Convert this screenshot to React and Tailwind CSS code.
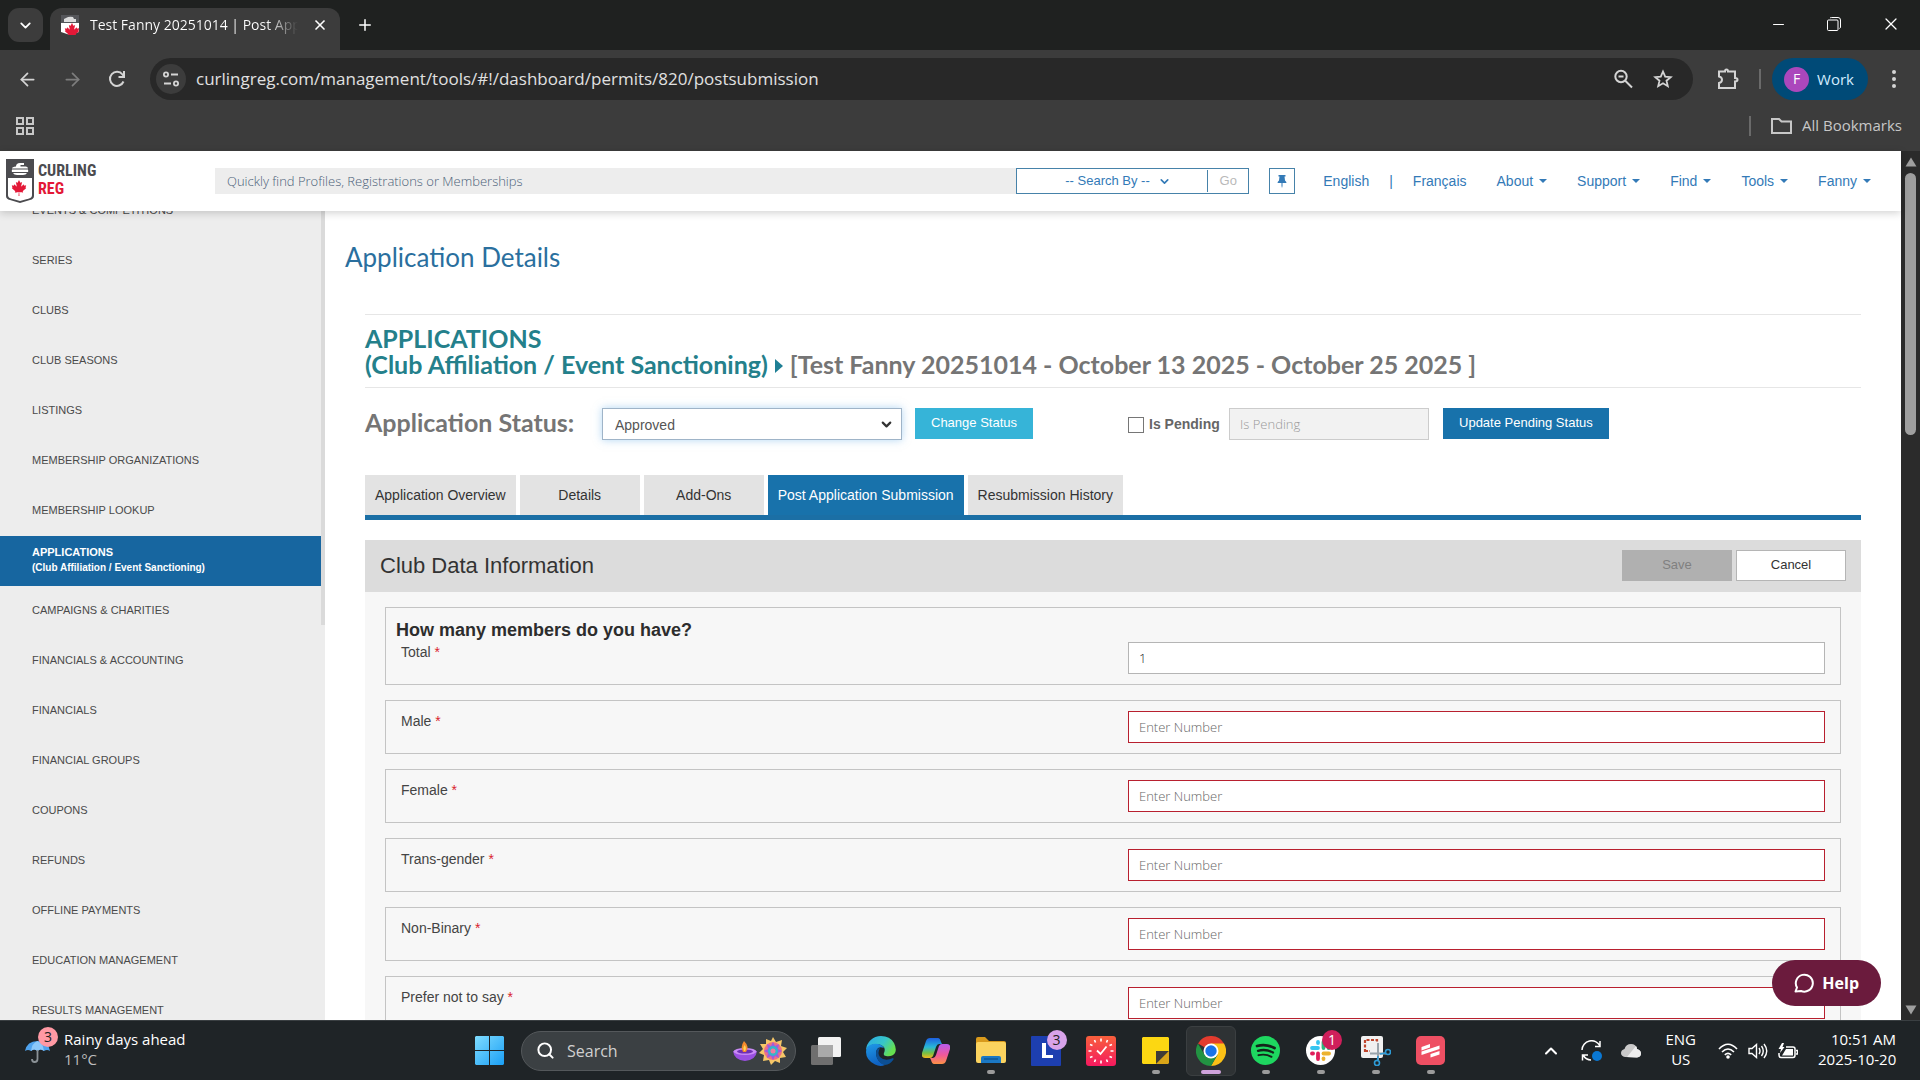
import { useState } from "react";
import {
    ArrowLeft,
    ArrowRight,
    ChevronDown,
    ChevronUp,
    Minus,
    Plus,
    Search,
    X,
} from "lucide-react";
import { FaCanadianMapleLeaf } from "react-icons/fa";

const menuItems = [
    "EVENTS & COMPETITIONS",
    "SERIES",
    "CLUBS",
    "CLUB SEASONS",
    "LISTINGS",
    "MEMBERSHIP ORGANIZATIONS",
    "MEMBERSHIP LOOKUP",
    "APPLICATIONS",
    "CAMPAIGNS & CHARITIES",
    "FINANCIALS & ACCOUNTING",
    "FINANCIALS",
    "FINANCIAL GROUPS",
    "COUPONS",
    "REFUNDS",
    "OFFLINE PAYMENTS",
    "EDUCATION MANAGEMENT",
    "RESULTS MANAGEMENT",
];

const tabs = [
    "Application Overview",
    "Details",
    "Add-Ons",
    "Post Application Submission",
    "Resubmission History",
];

const memberFields = [
    { id: "total", label: "Total", value: "1" },
    { id: "male", label: "Male", value: "" },
    { id: "female", label: "Female", value: "" },
    { id: "trans", label: "Trans-gender", value: "" },
    { id: "nonbinary", label: "Non-Binary", value: "" },
    { id: "notsay", label: "Prefer not to say", value: "" },
];

const LogoShield = ({ className }) => (
    <svg viewBox="0 0 28 44" className={className}>
        <path d="M0 0H28V37Q28 40 24 41L14 44L4 41Q0 40 0 37Z" fill="#4b4b4f" />
        <path d="M2 19H26V36Q26 38.500 23 39.500L14 42L5 39.500Q2 38.500 2 36Z" fill="#fff" />
        <path d="M10 7.500Q10 4 14 4H18V6H14.500V7.500H20Q22 8 22 9.500H6Q6 8 10 7.500Z" fill="#fff" />
        <path d="M6 10.500H22Q22.500 12 22 13H6Q5.500 12 6 10.500Z" fill="#fff" />
        <path d="M7 14H21Q20 16 17 16H11Q8 16 7 14Z" fill="#fff" />
        <FaCanadianMapleLeaf x="5" y="21" width="18" height="18" color="#e31837" />
    </svg>
);

/* Browser frame */

const BrowserTabs = () => (
    <div className="flex h-[50px] shrink-0 items-start bg-[#1f2120] pt-2 pl-2 text-white">
        <button aria-label="Search tabs" className="flex h-[34px] w-[35px] items-center justify-center rounded-[11px] bg-[#3c3c3c]">
            <ChevronDown size={17} strokeWidth={2.5} />
        </button>
        <div className="ml-[7px] flex h-[42px] w-[290px] items-center rounded-t-xl bg-[#3c3c3c] pb-2 pl-[11px]">
            <svg viewBox="0 0 18 20" className="h-5 w-[18px]">
                <path d="M0 0H18V17Q15 18 9 20Q3 18 0 17Z" fill="#fff" />
                <path d="M0 0H18V8H0Z" fill="#55565a" />
                <path d="M5 3Q8 1 12 2L13 4H15V7H3V4Z" fill="#ddd" />
                <FaCanadianMapleLeaf x="3" y="8" width="12" height="10" color="#e31837" />
            </svg>
            <span className="ml-[11px] w-[208px] overflow-hidden bg-gradient-to-r from-white from-85% to-transparent bg-clip-text text-sm whitespace-nowrap text-transparent">
                Test Fanny 20251014 | Post App
            </span>
            <button aria-label="Close tab" className="ml-[14px]">
                <X size={16} strokeWidth={2.5} />
            </button>
        </div>
        <button aria-label="New tab" className="mt-2 ml-4">
            <Plus size={18} strokeWidth={2} />
        </button>
        <div className="mt-[6px] mr-[19px] ml-auto flex items-center gap-10">
            <button aria-label="Minimize">
                <Minus size={17} strokeWidth={1.5} />
            </button>
            <button aria-label="Restore">
                <svg viewBox="0 0 14 14" className="h-[14px] w-[14px]" fill="none" stroke="currentColor">
                    <rect x="0.500" y="3" width="10.500" height="10.500" rx="1" />
                    <path d="M3 1Q3.500 0.500 4.500 0.500H11Q13.500 0.500 13.500 3V10Q13.500 11 12.500 11.500" />
                </svg>
            </button>
            <button aria-label="Close window">
                <X size={20} strokeWidth={1.5} />
            </button>
        </div>
    </div>
);

const BrowserToolbar = () => (
    <div className="flex h-[58px] shrink-0 items-center bg-[#3c3c3c] pr-5 pl-[17px] text-[#d4d4d4]">
        <button aria-label="Back">
            <ArrowLeft size={21} />
        </button>
        <button aria-label="Forward" className="ml-6 text-[#7d7d7d]">
            <ArrowRight size={21} />
        </button>
        <button aria-label="Reload" className="ml-6">
            <svg viewBox="0 0 20 20" className="h-5 w-5" fill="none" stroke="currentColor" strokeWidth="2">
                <path d="M16.500 12.500A7 7 0 1 1 15.500 5.500L17 7.500" />
                <path d="M17 2V8H11.500" />
            </svg>
        </button>
        <div className="ml-[23px] flex h-[42px] flex-1 items-center rounded-full bg-[#282828] pr-5 pl-[6px]">
            <button aria-label="Site settings" className="flex h-[30px] w-[30px] items-center justify-center rounded-full bg-[#3c3c3c]">
                <svg viewBox="0 0 16 16" className="h-4 w-4" fill="none" stroke="currentColor" strokeWidth="1.800">
                    <circle cx="3" cy="3.500" r="2.100" />
                    <path d="M8 3.500H15M1 12.500H8" />
                    <circle cx="13" cy="12.500" r="2.100" />
                </svg>
            </button>
            <input
                aria-label="Address"
                className="ml-[10px] min-w-0 flex-1 bg-transparent text-[17px] text-[#e0e0e0] outline-none"
                defaultValue="curlingreg.com/management/tools/#!/dashboard/permits/820/postsubmission"
            />
            <button aria-label="Zoom">
                <svg viewBox="0 0 20 20" className="h-5 w-5" fill="none" stroke="currentColor" strokeWidth="2">
                    <circle cx="8" cy="7.500" r="5.700" />
                    <path d="M12 11.500L19 18.500M5.500 7.500H10.500" />
                </svg>
            </button>
            <button aria-label="Bookmark" className="ml-5">
                <svg viewBox="0 0 20 20" className="h-5 w-5" fill="none" stroke="currentColor" strokeWidth="1.800">
                    <path d="M10 2.500L12.200 7.600L17.700 8.100L13.500 11.700L14.800 17.200L10 14.300L5.200 17.200L6.500 11.700L2.300 8.100L7.800 7.600Z" />
                </svg>
            </button>
        </div>
        <button aria-label="Extensions" className="ml-6">
            <svg viewBox="0 0 22 22" className="h-[22px] w-[22px]" fill="none" stroke="currentColor" strokeWidth="2">
                <path d="M2 3.500H8Q8 1.500 9.500 1.500Q11 1.500 11 3.500H18V10Q20.500 10 20.500 11.800Q20.500 13.500 18 13.500V20H2V15Q5 14.500 5 11.800Q5 9 2 8.500Z" />
            </svg>
        </button>
        <span className="ml-5 h-5 w-[2px] bg-[#6a6a6a]" />
        <button className="ml-[11px] flex h-[42px] items-center gap-2 rounded-full bg-[#004a77] pr-[14px] pl-3 text-[15px] text-[#d3ecff]">
            <span className="flex h-[25px] w-[25px] items-center justify-center rounded-full bg-[#ab47bc] text-sm text-white">
                F
            </span>
            Work
        </button>
        <button aria-label="Browser menu" className="ml-5 px-1">
            <svg viewBox="0 0 4 18" className="h-[18px] w-1" fill="currentColor">
                <circle cx="2" cy="2" r="2" />
                <circle cx="2" cy="9" r="2" />
                <circle cx="2" cy="16" r="2" />
            </svg>
        </button>
    </div>
);

const BookmarksBar = () => (
    <div className="flex h-[43px] shrink-0 items-center bg-[#3c3c3c] pr-[18px] pb-2 pl-4 text-[#c7c7c7]">
        <button aria-label="Apps">
            <svg viewBox="0 0 18 18" className="h-[18px] w-[18px]" fill="none" stroke="currentColor" strokeWidth="2">
                <path d="M1 1H7V7H1ZM11 1H17V7H11ZM1 11H7V17H1ZM11 11H17V17H11Z" />
            </svg>
        </button>
        <span className="ml-auto h-5 w-[2px] bg-[#6a6a6a]" />
        <button className="ml-5 flex items-center gap-[10px] text-[15px]">
            <svg viewBox="0 0 21 16" className="h-4 w-[21px]" fill="none" stroke="currentColor" strokeWidth="2">
                <path d="M1 1H8L10.500 3.500H20V15H1Z" />
            </svg>
            All Bookmarks
        </button>
    </div>
);

const PageScrollbar = () => (
    <div className="flex w-[19px] shrink-0 flex-col items-center justify-between bg-[#2b2b2b] pt-[6px] pb-[5px]">
        <svg viewBox="0 0 12 10" className="h-[10px] w-3" fill="#9f9f9f">
            <path d="M6 0.500L11.500 9.500H0.500Z" />
        </svg>
        <div className="mt-[6px] h-[262px] w-[11px] rounded-full bg-[#9f9f9f]" />
        <div className="flex-1" />
        <svg viewBox="0 0 12 10" className="h-[10px] w-3" fill="#9f9f9f">
            <path d="M6 9.500L11.500 0.500H0.500Z" />
        </svg>
    </div>
);

/* Site */

const SiteHeader = () => (
    <header className="relative z-10 flex h-[60px] shrink-0 items-center bg-white shadow-[0_2px_8px_rgba(0,0,0,0.18)]">
        <a href="#home" className="flex w-[215px] items-center gap-1 pl-[6px]">
            <LogoShield className="h-11 w-7" />
            <span className="flex flex-col pb-[2px] font-['Roboto_Condensed','Roboto',sans-serif] text-base leading-[18px] font-bold text-[#4b4b4f]">
                CURLING
                <span className="text-[#e31837]">REG</span>
            </span>
        </a>
        <input
            aria-label="Quick search"
            placeholder="Quickly find Profiles, Registrations or Memberships"
            className="h-[26px] min-w-0 flex-1 bg-[#ededed] px-3 font-['Open_Sans',sans-serif] text-[13px] font-light outline-none placeholder:text-[#4b5f78]"
        />
        <div className="flex h-[26px] w-[233px] items-center border border-[#4682a9] text-[13px] text-[#337ab7]">
            <div className="relative flex h-[22px] flex-1 items-center border-r border-[#4682a9]">
                <select aria-label="Search by" className="w-full appearance-none pl-12 outline-none">
                    <option>-- Search By --</option>
                </select>
                <ChevronDown size={13} strokeWidth={3} className="pointer-events-none absolute right-9" />
            </div>
            <button className="w-10 text-[#b9b9b9]">Go</button>
        </div>
        <button aria-label="Pin" className="ml-5 flex h-[26px] w-[26px] items-center justify-center border border-[#4682a9]">
            <svg viewBox="0 0 10 13" className="h-[13px] w-[10px]" fill="#337ab7">
                <path d="M1.500 0H8.500V1.500H7.500L8 5.500Q9.500 6.500 9.500 8H5.500V11L5 13L4.500 11V8H0.500Q0.500 6.500 2 5.500L2.500 1.500H1.500Z" />
            </svg>
        </button>
        <nav className="mr-[30px] ml-7 flex items-center gap-[30px] text-sm text-[#337ab7]">
            <div className="flex gap-5">
                <a href="#en">English</a>
                <span>|</span>
                <a href="#fr">Français</a>
            </div>
            {["About", "Support", "Find", "Tools", "Fanny"].map((item) => (
                <a key={item} href="#menu" className="flex items-center gap-[6px]">
                    {item}
                    <svg viewBox="0 0 8 4" className="h-1 w-2" fill="currentColor">
                        <path d="M0 0H8L4 4Z" />
                    </svg>
                </a>
            ))}
        </nav>
    </header>
);

const Sidebar = () => (
    <aside className="relative w-[325px] shrink-0 overflow-hidden bg-[#ededed] text-[11px] text-[#4a4a4a]">
        <nav className="-mt-[25px] mr-1 flex flex-col">
            {menuItems.map((item) =>
                item === "APPLICATIONS" ? (
                    <a
                        key={item}
                        href="#applications"
                        className="flex h-[50px] flex-col justify-center bg-[#1766a0] pb-[2px] pl-8 leading-4 font-bold text-white"
                    >
                        {item}
                        <span className="text-[10px]">(Club Affiliation / Event Sanctioning)</span>
                    </a>
                ) : (
                    <a key={item} href="#item" className="flex h-[50px] items-center pb-[2px] pl-8">
                        {item}
                    </a>
                )
            )}
        </nav>
        <div className="absolute top-0 right-0 h-[414px] w-1 bg-[#dadada]" />
    </aside>
);

const StatusBar = () => (
    <div className="mt-5 flex h-8 items-start text-[13px]">
        <label htmlFor="status" className="w-[237px] font-['Lato',sans-serif] text-[25px] leading-7 font-bold text-[#757575]">
            Application Status:
        </label>
        <div className="relative flex h-8 w-[300px] items-center">
            <select
                id="status"
                className="h-full w-full appearance-none border border-[#9fb4c8] bg-white pt-[2px] pl-3 text-sm text-[#555] shadow-[0_0_8px_rgba(102,175,233,0.5)] outline-none"
            >
                <option>Approved</option>
            </select>
            <ChevronDown size={15} strokeWidth={3.5} className="pointer-events-none absolute right-2 text-[#333]" />
        </div>
        <button className="ml-[13px] h-[31px] bg-[#36b4d8] px-4 pb-[2px] text-white">Change Status</button>
        <div className="ml-[95px] flex h-8 items-center gap-[5px]">
            <input
                id="pending"
                type="checkbox"
                className="mt-[2px] h-4 w-4 appearance-none border border-[#767676] bg-white"
            />
            <label htmlFor="pending" className="w-[75px] text-sm font-bold text-[#666]">
                Is Pending
            </label>
        </div>
        <input
            aria-label="Pending reason"
            placeholder="Is Pending"
            disabled
            className="ml-[5px] h-8 w-[200px] border border-[#ccc] bg-[#f2f2f2] px-[10px] font-['Open_Sans',sans-serif] font-light placeholder:text-[#999]"
        />
        <button className="ml-[14px] h-[31px] bg-[#1872ab] px-4 pb-[2px] text-white">Update Pending Status</button>
    </div>
);

const MemberField = ({ field, heading }) => {
    const [value, setValue] = useState(field.value);

    return (
        <div className="border border-[#c4c4c4] py-[10px]">
            {heading && (
                <h3 className="pl-[10px] text-lg leading-6 font-bold text-[#2d2d2d]">
                    {heading}
                </h3>
            )}
            <div className="grid grid-cols-2">
                <label htmlFor={field.id} className="pl-[15px] text-sm leading-5 text-[#444]">
                    {field.label} <span className="text-[#d9232e]">*</span>
                </label>
                <div className="px-[15px]">
                    <input
                        id={field.id}
                        value={value}
                        onChange={(e) => setValue(e.target.value)}
                        placeholder="Enter Number"
                        className={`h-8 w-full border bg-white px-[10px] font-['Open_Sans',sans-serif] text-[13px] font-light text-[#222] outline-none placeholder:text-[#666] ${
                            value ? "border-[#b5b5b5]" : "border-[#b8202f]"
                        }`}
                    />
                </div>
            </div>
        </div>
    );
};

const MainContent = () => (
    <main className="min-w-0 flex-1 overflow-hidden bg-white pt-[29px] pr-10 pl-5">
        <h1 className="font-['Lato',sans-serif] text-[26px] leading-[34px] text-[#2a6f9e]">
            Application Details
        </h1>
        <div className="mt-10 pl-5">
            <h2 className="border-y border-[#e6e6e6] py-[10px] font-['Lato',sans-serif] text-[25px] leading-[26px] font-bold text-[#757575]">
                <a href="#applications" className="text-[#24808b]">
                    APPLICATIONS
                    <br />
                    (Club Affiliation / Event Sanctioning)
                </a>
                <svg viewBox="0 0 8 14" className="mx-[7px] mb-1 inline h-[14px] w-2" fill="#1f7f95">
                    <path d="M0 0L8 7L0 14Z" />
                </svg>
                [Test Fanny 20251014 - October 13 2025 - October 25 2025 ]
            </h2>

            <StatusBar />

            <div className="mt-[35px] flex gap-1 border-b-[5px] border-[#1b6fa5] text-sm">
                {tabs.map((tab) => (
                    <button
                        key={tab}
                        className={`h-10 min-w-[120px] px-[10px] ${
                            tab === "Post Application Submission"
                                ? "bg-[#1872ab] text-white"
                                : "bg-[#e3e3e3] text-[#333]"
                        }`}
                    >
                        {tab}
                    </button>
                ))}
            </div>

            <section className="mt-5 bg-[#f7f7f7]">
                <div className="flex h-[52px] items-center bg-[#dcdcdc] px-[15px] pb-[2px]">
                    <h2 className="flex-1 text-[22px] text-[#333]">Club Data Information</h2>
                    <button disabled className="h-[31px] w-[110px] bg-[#b0b0b0] text-[13px] text-[#808080]">
                        Save
                    </button>
                    <button className="ml-1 h-[31px] w-[110px] border border-[#b5b5b5] bg-white text-[13px] text-[#333]">
                        Cancel
                    </button>
                </div>
                <div className="flex flex-col gap-[15px] px-5 pt-[15px]">
                    {memberFields.map((field, i) => (
                        <MemberField
                            key={field.id}
                            field={field}
                            heading={i === 0 ? "How many members do you have?" : null}
                        />
                    ))}
                </div>
            </section>
        </div>
    </main>
);

/* Windows taskbar */

const WindowsIcon = () => (
    <svg viewBox="0 0 29 29" className="h-[29px] w-[29px]">
        <defs>
            <linearGradient id="win" x1="0" y1="0" x2="1" y2="1" gradientUnits="objectBoundingBox">
                <stop offset="0" stopColor="#7fdcff" />
                <stop offset="1" stopColor="#1a9ff5" />
            </linearGradient>
        </defs>
        <path d="M1 0H14V14H0V1ZM15 0H28L29 1V14H15ZM0 15H14V29H1L0 28ZM15 15H29V28L28 29H15Z" fill="url(#win)" />
    </svg>
);

const DiyaIcon = () => (
    <svg viewBox="0 0 54 28" className="h-7 w-[54px]">
        <path d="M0 14Q1 23 12 24Q23 23 24 14Q12 19 0 14Z" fill="#9a4fe0" />
        <ellipse cx="12" cy="14.500" rx="11.500" ry="3.500" fill="#c98af5" />
        <ellipse cx="12" cy="14.500" rx="8" ry="2" fill="#6f2fb4" />
        <path d="M11 4Q17 10 13 15H10Q7 10 11 4Z" fill="#f58a2c" />
        <path d="M11.500 8Q14 11 12 14H11Q9.500 11 11.500 8Z" fill="#ffd75a" />
        <path d="M40 0L43 5L49 3L48 9L54 11L50 15L53 20L47 21L47 26L42 24L38 28L36 23L30 24L31 18L26 16L30 12L27 7L33 7L33 2L38 4Z" fill="#f6c667" />
        <circle cx="40" cy="14" r="9" fill="#ec6f86" />
        <path d="M40 5L42 9L46 7L45 12L49 14L45 16L46 21L42 19L40 23L38 19L34 21L35 16L31 14L35 12L34 7L38 9Z" fill="#9b5de0" />
        <circle cx="40" cy="14" r="5" fill="#35b6c9" />
        <circle cx="40" cy="14" r="2.500" fill="#f07aa0" />
    </svg>
);

const TaskViewIcon = () => (
    <svg viewBox="0 0 30 28" className="h-7 w-[30px]">
        <rect x="7" y="0" width="23" height="20" rx="1.500" fill="#f2f2f2" />
        <rect x="0" y="8" width="22" height="20" rx="1.500" fill="#6f6f6f" />
        <path d="M7 8H22V20H7Z" fill="#a9a9a9" />
    </svg>
);

const EdgeIcon = () => (
    <svg viewBox="0 0 30 30" className="h-[30px] w-[30px]">
        <defs>
            <linearGradient id="edgeTop" x1="0" y1="0" x2="1" y2="0.500">
                <stop offset="0" stopColor="#2aa8e8" />
                <stop offset="0.600" stopColor="#37c6c9" />
                <stop offset="1" stopColor="#66e04f" />
            </linearGradient>
            <linearGradient id="edgeLow" x1="0" y1="0" x2="0.300" y2="1">
                <stop offset="0" stopColor="#1f9ae8" />
                <stop offset="1" stopColor="#0f62c2" />
            </linearGradient>
        </defs>
        <path d="M0 14A15 15 0 0 1 15 0Q24 0 28 7Q31 13 29 17Q26 21 20 20Q17 19.500 18 17Q21 10 12 8Q4 7 0 14Z" fill="url(#edgeTop)" />
        <path d="M0 16Q0 9 7 8Q15 7 18 12Q10 9 10 18Q11 26 19 29Q14 31 9 28.500Q0 24 0 16Z" fill="url(#edgeLow)" />
        <path d="M10 18Q10 12 14 12Q11 17 14 21Q19 26 27 22Q28 22.500 27.500 23.500Q24 28.500 19 29Q11 27 10 18Z" fill="#0c4f94" />
    </svg>
);

const CopilotIcon = () => (
    <svg viewBox="0 0 28 26" className="h-[26px] w-7">
        <defs>
            <linearGradient id="copA" x1="0" y1="0" x2="0" y2="1">
                <stop offset="0" stopColor="#1d5fe0" />
                <stop offset="0.450" stopColor="#27b7d8" />
                <stop offset="0.750" stopColor="#74c044" />
                <stop offset="1" stopColor="#f5b91e" />
            </linearGradient>
            <linearGradient id="copB" x1="0" y1="0" x2="0" y2="1">
                <stop offset="0" stopColor="#b65bf0" />
                <stop offset="0.550" stopColor="#f0589a" />
                <stop offset="1" stopColor="#fb9145" />
            </linearGradient>
        </defs>
        <path d="M8 0H16Q18 0 19 4L20 6H17Q15 6 14 9L11 18Q10 20 8 20H3Q-1 20 0 15L4 3Q5 0 8 0Z" fill="url(#copA)" />
        <path d="M20 26H12Q10 26 9 22L8 20H11Q13 20 14 17L17 8Q18 6 20 6H25Q29 6 28 11L24 23Q23 26 20 26Z" fill="url(#copB)" />
    </svg>
);

const FolderIcon = () => (
    <svg viewBox="0 0 30 27" className="h-[27px] w-[30px]">
        <path d="M0 2Q0 0 2 0H9L13 4H28Q30 4 30 6V12H0Z" fill="#d99a1c" />
        <path d="M0 7Q0 5 2 5H28Q30 5 30 7V24Q30 26 28 26H2Q0 26 0 24Z" fill="#fbd35f" />
        <path d="M5 26V21Q5 19 7 19H23Q25 19 25 21V26Z" fill="#1b78c4" />
        <path d="M8 22H22" stroke="#0d4f8c" strokeWidth="1.200" />
    </svg>
);

const LIcon = () => (
    <svg viewBox="0 0 30 30" className="h-[30px] w-[30px]">
        <rect width="30" height="30" rx="1" fill="#1d3fb0" />
        <path d="M11 7H15V19H22V22H11Z" fill="#fff" />
    </svg>
);

const ClockIcon = () => (
    <svg viewBox="0 0 30 30" className="h-[30px] w-[30px]">
        <defs>
            <linearGradient id="clk" x1="0" y1="0" x2="0" y2="1">
                <stop offset="0" stopColor="#f8603c" />
                <stop offset="1" stopColor="#f5195f" />
            </linearGradient>
        </defs>
        <rect width="30" height="30" rx="3" fill="url(#clk)" />
        <path
            d="M15 2.500V5.500M15 24.500V27.500M2.500 15H5.500M24.500 15H27.500M8.500 4L9.500 6.500M21.500 4L20.500 6.500M8.500 26L9.500 23.500M21.500 26L20.500 23.500M4 8.500L6.500 9.500M26 8.500L23.500 9.500M4 21.500L6.500 20.500M26 21.500L23.500 20.500"
            stroke="#fff"
            strokeWidth="1.600"
        />
        <path d="M11 14.500L14.500 18L20.500 10.500" fill="none" stroke="#fff" strokeWidth="1.800" />
    </svg>
);

const StickyIcon = () => (
    <svg viewBox="0 0 27 27" className="h-[27px] w-[27px]">
        <path d="M1 0H26L27 1V14L14 27H1L0 26V1Z" fill="#fcd712" />
        <path d="M14 14H27L14 27Z" fill="#3f3c36" />
        <path d="M27 14V26L26 27H14Z" fill="#d9a518" />
    </svg>
);

const ChromeIcon = () => (
    <svg viewBox="0 0 30 30" className="h-[30px] w-[30px]">
        <path d="M15 15L2 7.500A15 15 0 0 1 28 7.500Z" fill="#e33b2e" />
        <path d="M28 7.500A15 15 0 0 1 15 30L21.500 18.700L15 7.500Z" fill="#fbc116" />
        <path d="M2 7.500A15 15 0 0 0 15 30L21.500 18.700H8.500Z" fill="#229342" />
        <circle cx="15" cy="15" r="7.500" fill="#fff" />
        <circle cx="15" cy="15" r="5.700" fill="#1a73e8" />
    </svg>
);

const SpotifyIcon = () => (
    <svg viewBox="0 0 29 29" className="h-[29px] w-[29px]">
        <circle cx="14.500" cy="14.500" r="14.500" fill="#1ed760" />
        <g fill="none" stroke="#14231a" strokeLinecap="round">
            <path d="M6 10Q15 7.500 23.500 12" strokeWidth="2.800" />
            <path d="M7 14.800Q15 12.600 22 16.500" strokeWidth="2.300" />
            <path d="M7.500 19.200Q14.500 17.500 20.500 20.800" strokeWidth="1.900" />
        </g>
    </svg>
);

const SlackIcon = () => (
    <svg viewBox="0 0 29 29" className="h-[29px] w-[29px]">
        <circle cx="14.500" cy="14.500" r="14.500" fill="#fff" />
        <g strokeWidth="3.800" strokeLinecap="round">
            <path d="M12 6V7" stroke="#36c5f0" />
            <path d="M6 12H12" stroke="#36c5f0" />
            <path d="M17.500 6V12" stroke="#2eb67d" />
            <path d="M22.500 12H23" stroke="#2eb67d" />
            <path d="M17.500 17.500H23" stroke="#ecb22e" />
            <path d="M17.500 22.500V23" stroke="#ecb22e" />
            <path d="M12 17.500V23" stroke="#e01e5a" />
            <path d="M6 17.500H7" stroke="#e01e5a" />
        </g>
    </svg>
);

const SnipIcon = () => (
    <svg viewBox="0 0 30 30" className="h-[30px] w-[30px]">
        <rect width="22" height="22" rx="2" fill="#f1f1f1" />
        <path d="M4 16V4H16V7M4 15H9" fill="none" stroke="#c0462d" strokeWidth="2.200" strokeDasharray="3 1.500" />
        <path d="M17 7V24M9 17.500H25" stroke="#9aa4ab" strokeWidth="2" />
        <circle cx="27" cy="16" r="2.500" fill="none" stroke="#2e9bd6" strokeWidth="1.600" />
        <circle cx="16" cy="27" r="2.500" fill="none" stroke="#2e9bd6" strokeWidth="1.600" />
        <path d="M19 18L25 17M17 20L16.500 24.500" stroke="#2e9bd6" strokeWidth="1.600" />
    </svg>
);

const RedIcon = () => (
    <svg viewBox="0 0 29 29" className="h-[29px] w-[29px]">
        <rect width="29" height="29" rx="5" fill="#ee4f63" />
        <path d="M5.500 11L14 8V11.500L5.500 14.500ZM14.500 12.500L23.500 9.500V13L5.500 19V15.500ZM14.500 18L23.500 15V18.500L14.500 21.500Z" fill="#fff" />
    </svg>
);

const taskbarApps = [
    { name: "Task view", Icon: TaskViewIcon },
    { name: "Edge", Icon: EdgeIcon },
    { name: "Copilot", Icon: CopilotIcon },
    { name: "Files", Icon: FolderIcon, running: true },
    { name: "L", Icon: LIcon, badge: "3", badgeColor: "bg-[#d8a3ea] text-[#222]" },
    { name: "Clock", Icon: ClockIcon },
    { name: "Sticky Notes", Icon: StickyIcon, running: true },
    { name: "Chrome", Icon: ChromeIcon, active: true },
    { name: "Spotify", Icon: SpotifyIcon, running: true },
    { name: "Slack", Icon: SlackIcon, running: true, badge: "1", badgeColor: "bg-[#cf1f5b] text-white" },
    { name: "Snipping Tool", Icon: SnipIcon, running: true },
    { name: "Editor", Icon: RedIcon, running: true },
];

const TaskbarApp = ({ app }) => {
    const { Icon } = app;

    return (
        <button aria-label={app.name} className="relative flex h-full w-[55px] items-center justify-center">
            {app.active && (
                <span className="absolute h-[50px] w-[50px] rounded-md border border-[#3b3f41] bg-[#2e3234]" />
            )}
            <span className="relative">
                <Icon />
                {app.badge && (
                    <span
                        className={`absolute -top-[6px] left-4 flex h-5 w-5 items-center justify-center rounded-full text-sm ${app.badgeColor}`}
                    >
                        {app.badge}
                    </span>
                )}
            </span>
            {app.running && (
                <span className="absolute bottom-[6px] h-1 w-2 rounded-full bg-[#9b9b9b]" />
            )}
            {app.active && (
                <span className="absolute bottom-[6px] h-1 w-5 rounded-full bg-[#cfa3dc]" />
            )}
        </button>
    );
};

const Taskbar = () => (
    <footer className="grid h-[60px] shrink-0 grid-cols-[1fr_auto_1fr] border-t border-[#3a3f42] bg-[#1f2427] text-[15px] leading-5 text-white">
        <div className="flex items-center pl-[25px]">
            <span className="relative mr-[14px]">
                <svg viewBox="0 0 25 24" className="h-6 w-[25px]">
                    <path d="M0 12Q2 2 12.500 2Q23 2 25 12Q22 10 19 12Q15.500 9 12.500 12Q9 9 6 12Q3 10 0 12Z" fill="#4fa3ee" />
                    <path d="M6 12Q7 4 12.500 2Q18 4 19 12Q15.500 9 12.500 12Q9 9 6 12Z" fill="#8cc8fa" />
                    <path d="M12.500 11V20Q12.500 23 9.500 23Q7 23 7 20" fill="none" stroke="#8b9297" strokeWidth="1.800" />
                </svg>
                <span className="absolute -top-3 left-[13px] flex h-5 w-5 items-center justify-center rounded-full bg-[#ff99a4] text-sm text-[#222]">
                    3
                </span>
            </span>
            <div className="pb-1">
                <div>Rainy days ahead</div>
                <div className="text-[#bdbdbd]">11°C</div>
            </div>
        </div>

        <div className="flex items-center">
            <button aria-label="Start" className="flex w-[55px] justify-center">
                <WindowsIcon />
            </button>
            <div className="ml-1 flex h-10 w-[275px] items-center rounded-full border border-[#54585b] bg-[#3b4043] pr-2 pl-[14px]">
                <Search size={19} strokeWidth={2.5} />
                <input
                    aria-label="Search Windows"
                    placeholder="Search"
                    className="ml-3 min-w-0 flex-1 bg-transparent text-base outline-none placeholder:text-[#d0d0d0]"
                />
                <DiyaIcon />
            </div>
            <div className="ml-[2px] flex h-full">
                {taskbarApps.map((app) => (
                    <TaskbarApp key={app.name} app={app} />
                ))}
            </div>
        </div>

        <div className="flex items-center justify-end pr-6">
            <ChevronUp size={20} strokeWidth={2.5} />
            <svg viewBox="0 0 22 22" className="ml-5 h-[22px] w-[22px]" fill="none" stroke="#fff" strokeWidth="1.500">
                <path d="M1 10A9.500 9.500 0 0 1 19 6M19 1V6.500H14" />
                <path d="M10 20Q5 20 2 15M7 15H1.500V20.500" />
                <circle cx="16" cy="16" r="5" fill="#0a78d4" stroke="none" />
            </svg>
            <svg viewBox="0 0 20 15" className="ml-[18px] h-[15px] w-5">
                <path d="M4 14Q0 13 0 10Q0 7 3.500 6Q5 1 10 1Q15 1 16 6Q20 7 20 10.500Q20 14 16 14.500Z" fill="#c9c9c9" />
                <path d="M6 14L15 3Q16 4 16 6Q20 7 20 10.500Q20 14 16 14.500Z" fill="#ededed" />
            </svg>
            <div className="ml-6 pb-1 text-center">
                ENG
                <br />
                US
            </div>
            <svg viewBox="0 0 20 16" className="ml-[22px] h-4 w-5" fill="none" stroke="#fff" strokeWidth="1.600">
                <path d="M1 6Q10 -3.500 19 6M4 9Q10 3 16 9M6.800 11.800Q10 9 13.200 11.800" />
                <circle cx="10" cy="14" r="1.800" fill="#fff" stroke="none" />
            </svg>
            <svg viewBox="0 0 20 16" className="ml-[10px] h-4 w-5" fill="none" stroke="#fff" strokeWidth="1.400">
                <path d="M1 5.500H4L8.500 1.500V14.500L4 10.500H1Z" />
                <path d="M11 5Q13 8 11 11M13.500 3Q17 8 13.500 13M16 1Q21.500 8 16 15" />
            </svg>
            <svg viewBox="0 0 20 16" className="ml-[10px] h-4 w-5" fill="none" stroke="#fff" strokeWidth="1.500">
                <path d="M8 4H15Q17 4 17 6V12Q17 14.500 15 14.500H3Q1 14.500 1 12V10" />
                <path d="M8 6H15V12.500H4Z" fill="#fff" stroke="none" />
                <path d="M18 7.500H19.500V11H18" />
                <path d="M4 0L0.500 6H3L2 10L6.500 4H4.500L6 0Z" fill="#fff" stroke="none" />
            </svg>
            <div className="ml-5 w-[78px] pb-1 text-right whitespace-nowrap">
                10:51 AM
                <br />
                2025-10-20
            </div>
        </div>
    </footer>
);

export default function App() {
    return (
        <div className="flex h-screen flex-col overflow-hidden font-['Open_Sans',sans-serif]">
            <BrowserTabs />
            <BrowserToolbar />
            <BookmarksBar />
            <div className="flex min-h-0 flex-1 font-['Liberation_Sans',sans-serif]">
                <div className="relative flex min-w-0 flex-1 flex-col">
                    <SiteHeader />
                    <div className="flex min-h-0 flex-1">
                        <Sidebar />
                        <MainContent />
                    </div>
                    <button className="absolute right-5 bottom-[14px] z-20 flex h-[46px] items-center gap-2 rounded-full bg-[#6b1b3d] px-[22px] font-['Open_Sans',sans-serif] text-base font-bold text-white">
                        <svg viewBox="0 0 20 20" className="h-5 w-5" fill="none" stroke="currentColor" strokeWidth="2">
                            <path d="M3 14.500A8.500 8.500 0 1 1 7 18L1.500 18.500Z" strokeLinejoin="round" />
                        </svg>
                        Help
                    </button>
                </div>
                <PageScrollbar />
            </div>
            <Taskbar />
        </div>
    );
}
